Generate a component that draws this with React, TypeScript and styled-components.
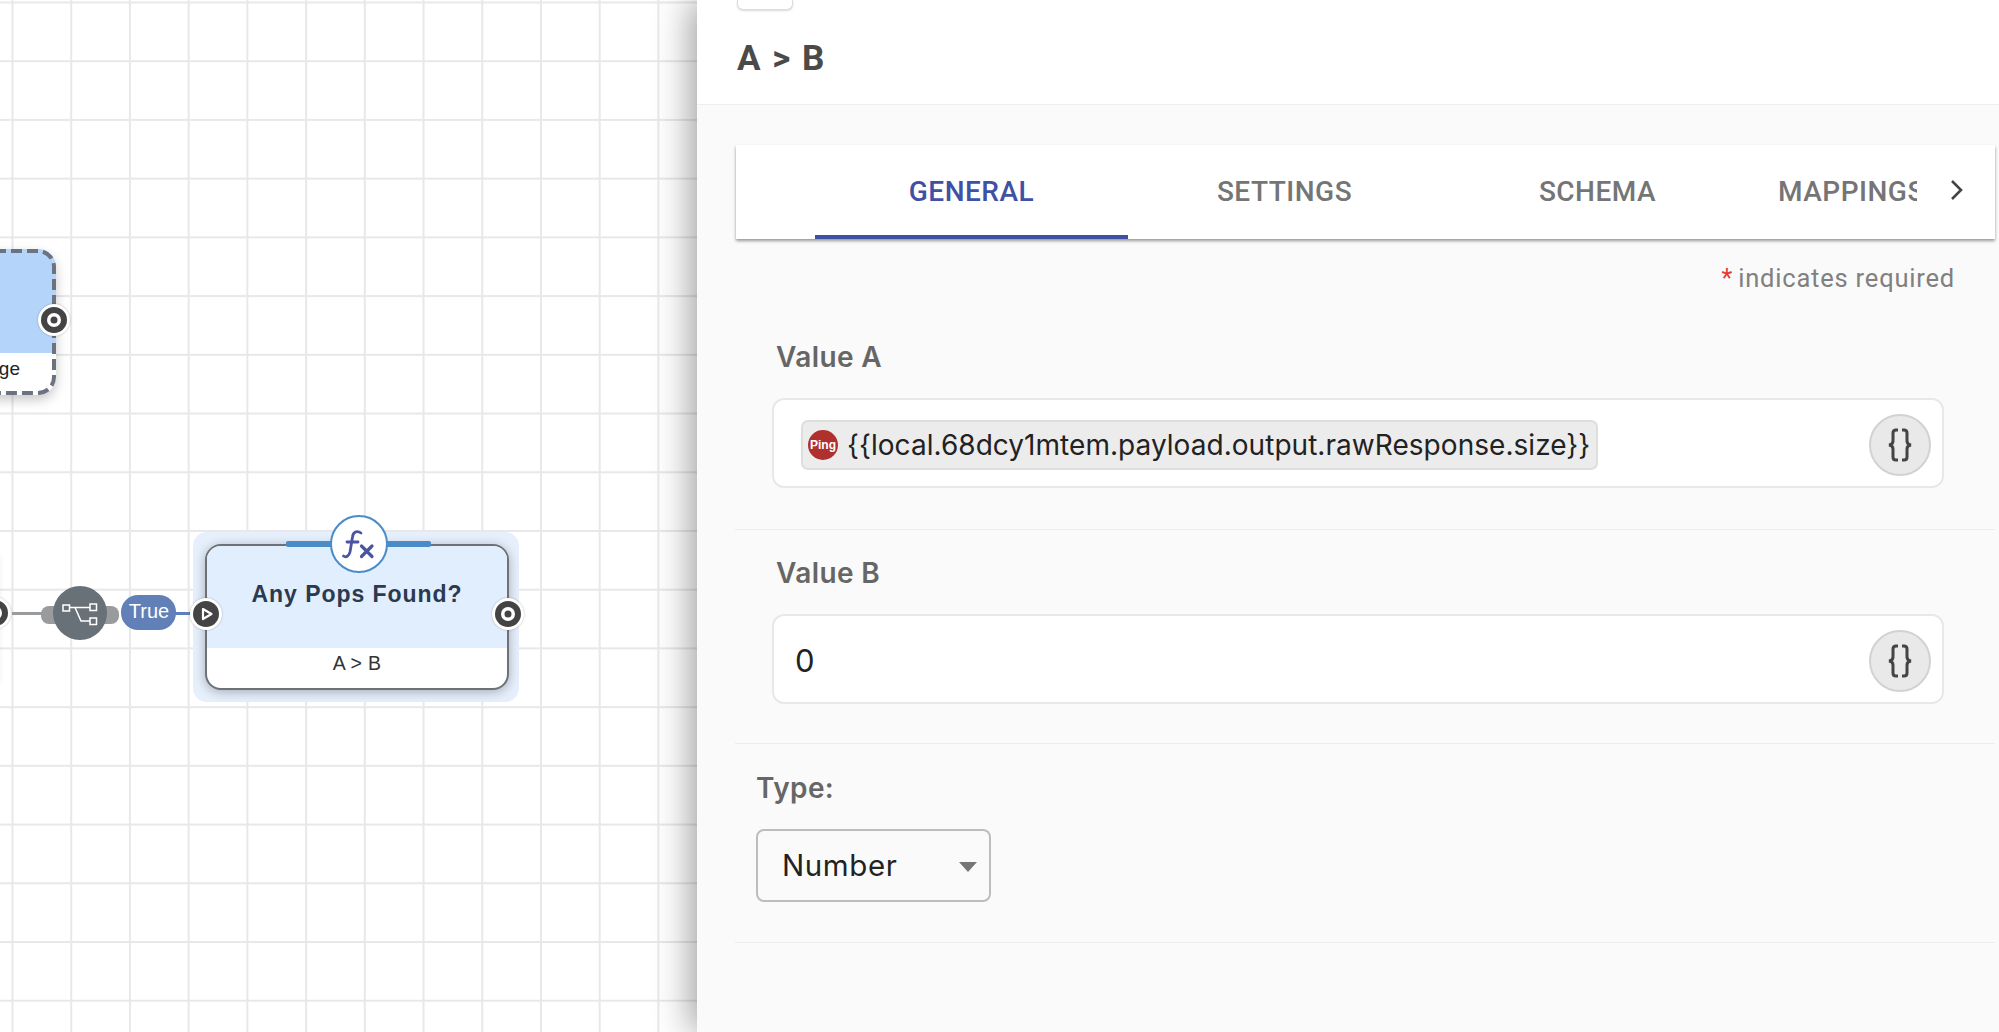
import styled, { createGlobalStyle } from "styled-components";

const GlobalStyle = createGlobalStyle`
  html, body {
    margin: 0;
    height: 100%;
    overflow: hidden;
    background: #fff;
  }
  #root {
    height: 100%;
  }
`;

const Page = styled.div`
  display: flex;
  width: 1999px;
  height: 1032px;
  overflow: hidden;
  font-family: Inter, "Liberation Sans", sans-serif;
`;

/* free canvas: everything in here sits at its diagram position */
const Canvas = styled.div`
  position: relative;
  flex: 0 0 697px;
  height: 100%;
  overflow: visible;
  background-color: #fff;
  background-image: linear-gradient(to right, #e8e8ea 2px, transparent 2px),
    linear-gradient(to bottom, #e8e8ea 2px, transparent 2px);
  background-size: 58.72px 58.72px;
  background-position: 11.5px 1.5px;
`;

const DashedNode = styled.div`
  position: absolute;
  left: -247px;
  top: 249px;
  width: 303px;
  height: 146px;
  border-radius: 18px;
  background: #fff;
  box-shadow: 0 5px 12px rgba(0, 0, 0, 0.22);
  display: flex;
  flex-direction: column;
  overflow: hidden;
`;

const DashedTop = styled.div`
  height: 104px;
  background: #b4d4fa;
`;

const DashedLabel = styled.div`
  flex: 1;
  text-align: right;
  padding-right: 36px;
  font-family: "Liberation Sans", Arial, sans-serif;
  font-size: 19px;
  line-height: 32px;
  color: #222;
`;

const DashedOutline = styled.svg`
  position: absolute;
  left: -247px;
  top: 249px;
  width: 303px;
  height: 146px;
  fill: none;
  stroke: #6b7280;
  stroke-width: 4;
  stroke-dasharray: 11 5;
`;

const OffscreenNode = styled.div`
  position: absolute;
  left: -310px;
  top: 544px;
  width: 305px;
  height: 145px;
  border-radius: 16px;
  background: #fff;
  box-shadow: 0 3px 9px rgba(0, 0, 0, 0.3);
`;

const Halo = styled.div`
  position: absolute;
  left: 193px;
  top: 532px;
  width: 326px;
  height: 170px;
  border-radius: 14px;
  background: #e6effc;
`;

const Node = styled.div`
  position: absolute;
  left: 205px;
  top: 544px;
  width: 304px;
  height: 146px;
  box-sizing: border-box;
  border: 2px solid #6e7276;
  border-radius: 16px;
  background: #fff;
  box-shadow: 0 2px 11px rgba(0, 0, 0, 0.28);
  display: flex;
  flex-direction: column;
  overflow: hidden;
`;

const NodeHead = styled.div`
  height: 102px;
  background: #e1eefd;
  padding-top: 32px;
  box-sizing: border-box;
  text-align: center;
  font-family: "Liberation Sans", Arial, sans-serif;
  font-weight: 700;
  font-size: 23px;
  line-height: 32px;
  letter-spacing: 0.95px;
  color: #2b3a4e;
`;

const NodeSub = styled.div`
  flex: 1;
  text-align: center;
  font-family: "Liberation Sans", Arial, sans-serif;
  font-size: 19.5px;
  line-height: 31px;
  letter-spacing: 0.3px;
  color: #333;
`;

const TopBar = styled.div`
  position: absolute;
  left: 286px;
  top: 541px;
  width: 145px;
  height: 6px;
  border-radius: 2px;
  background: #4a8cc8;
`;

const FxBadge = styled.div`
  position: absolute;
  left: 330px;
  top: 515px;
  width: 58px;
  height: 58px;
  box-sizing: border-box;
  border: 2px solid #4a8cc8;
  border-radius: 50%;
  background: #fff;
  display: flex;
  align-items: center;
  justify-content: center;
`;

const Port = styled.div<{ $x: number; $y: number }>`
  position: absolute;
  left: ${(p) => p.$x - 16}px;
  top: ${(p) => p.$y - 16}px;
  width: 32px;
  height: 32px;
  border-radius: 50%;
  background: #fff;
  box-shadow: 0 0 2px rgba(0, 0, 0, 0.3);
  display: flex;
  align-items: center;
  justify-content: center;
`;

const Edge = styled.div<{ $x: number; $w: number; $color: string }>`
  position: absolute;
  left: ${(p) => p.$x}px;
  top: 612px;
  width: ${(p) => p.$w}px;
  height: 3px;
  background: ${(p) => p.$color};
`;

const Connector = styled.div`
  position: absolute;
  left: 41px;
  top: 606px;
  width: 78px;
  height: 18px;
  border-radius: 8px;
  background: #999b9d;
`;

const Splitter = styled.div`
  position: absolute;
  left: 53px;
  top: 586px;
  width: 54px;
  height: 54px;
  border-radius: 50%;
  background: #687078;
  display: flex;
  align-items: center;
  justify-content: center;
`;

const TruePill = styled.div`
  position: absolute;
  left: 121px;
  top: 595px;
  width: 55px;
  height: 35px;
  padding-left: 1px;
  box-sizing: border-box;
  border-radius: 17px;
  background: #6280b8;
  color: #fff;
  font-family: "Liberation Sans", Arial, sans-serif;
  font-size: 20px;
  line-height: 32px;
  text-align: center;
`;

const Panel = styled.div`
  position: relative;
  flex: 1;
  height: 100%;
  background: #fafafa;
  box-shadow: -6px 0 34px rgba(0, 0, 0, 0.38);
`;

const PanelHeader = styled.div`
  height: 105px;
  box-sizing: border-box;
  background: #fff;
  border-bottom: 1px solid #eeeeee;
  padding-left: 40px;
`;

const TopButton = styled.div`
  width: 56px;
  height: 10px;
  box-sizing: border-box;
  background: #fff;
  border: 1px solid #dcdcdc;
  border-top: 0;
  border-radius: 0 0 6px 6px;
  box-shadow: 0 1px 2px rgba(0, 0, 0, 0.15);
`;

const Title = styled.h1`
  margin: 29px 0 0;
  font-family: Roboto, sans-serif;
  font-weight: 700;
  font-size: 35px;
  line-height: 40px;
  letter-spacing: 1.5px;
  color: #4a4a4a;
`;

const TabBar = styled.div`
  display: flex;
  height: 94px;
  margin: 40px 4px 0 39px;
  background: #fff;
  box-shadow: 0 2px 3px rgba(0, 0, 0, 0.4);
  overflow: hidden;
`;

const TabSpacer = styled.div`
  flex: 0 0 79px;
`;

const Tab = styled.div<{ $active?: boolean; $width: number }>`
  flex: 0 0 ${(p) => p.$width}px;
  height: 94px;
  box-sizing: border-box;
  border-bottom: 4px solid ${(p) => (p.$active ? "#3f51a5" : "transparent")};
  padding-top: 3px;
  display: flex;
  align-items: center;
  justify-content: center;
  font-family: Roboto, sans-serif;
  font-weight: 500;
  font-size: 28px;
  letter-spacing: 0.5px;
  color: ${(p) => (p.$active ? "#3f51a5" : "#757575")};
  white-space: nowrap;
  overflow: hidden;
`;

const ClippedTab = styled(Tab)`
  justify-content: flex-start;
  padding-left: 24px;
`;

const ScrollButton = styled.div`
  flex: 1;
  display: flex;
  align-items: center;
  justify-content: center;
  padding-bottom: 4px;
  color: #444;
`;

const RequiredNote = styled.div`
  display: flex;
  justify-content: flex-end;
  align-items: center;
  gap: 5px;
  height: 30px;
  margin-top: 24px;
  padding-right: 44px;
  font-family: Roboto, sans-serif;
  font-weight: 400;
  font-size: 25.5px;
  letter-spacing: 0.8px;
  color: #808080;
`;

const Star = styled.span`
  color: #e53935;
  font-size: 25px;
`;

const Section = styled.section<{ $top: number; $left: number; $bottom: number }>`
  margin: 0 4px 0 38px;
  padding: ${(p) => p.$top}px 51px ${(p) => p.$bottom}px ${(p) => p.$left}px;
  border-bottom: 1px solid #ededed;
`;

const FieldLabel = styled.div<{ $gap: number; $indent?: number }>`
  height: 34px;
  margin-bottom: ${(p) => p.$gap}px;
  padding-left: ${(p) => p.$indent ?? 0}px;
  font-weight: 600;
  font-size: 28px;
  line-height: 34px;
  letter-spacing: 0.4px;
  color: #666;
`;

const FieldBox = styled.div<{ $height: number }>`
  display: flex;
  align-items: center;
  justify-content: space-between;
  height: ${(p) => p.$height}px;
  box-sizing: border-box;
  padding: 0 11px 0 27px;
  background: #fff;
  border: 2px solid #e8e8e8;
  border-radius: 12px;
  font-size: 28px;
  letter-spacing: 0.04px;
  color: #222;
`;

const Chip = styled.div`
  display: flex;
  align-items: center;
  gap: 9px;
  height: 50px;
  box-sizing: border-box;
  margin-top: 4px;
  padding: 0 6px 0 5px;
  background: #ececec;
  border: 2px solid #dedede;
  border-radius: 7px;
  white-space: nowrap;
`;

const PlainValue = styled.span`
  margin: 2px 0 0 -6px;
  font-size: 31px;
`;

const PingBadge = styled.div`
  flex: 0 0 30px;
  width: 30px;
  height: 30px;
  border-radius: 50%;
  background: #b0302e;
  color: #fff;
  font-family: "Liberation Sans", Arial, sans-serif;
  font-weight: 700;
  font-size: 12px;
  line-height: 30px;
  text-align: center;
`;

const CodeButton = styled.div`
  flex: 0 0 62px;
  width: 62px;
  height: 62px;
  box-sizing: border-box;
  margin-top: 4px;
  border: 2px solid #d2d2d2;
  border-radius: 50%;
  background: #e9e9e9;
  display: flex;
  align-items: center;
  justify-content: center;
`;

const TypeSelect = styled.div`
  position: relative;
  width: 235px;
  height: 73px;
  box-sizing: border-box;
  padding-left: 24px;
  background: #fafafa;
  border: 2px solid #bdbdbd;
  border-radius: 8px;
  font-size: 29.5px;
  line-height: 69px;
  letter-spacing: 0.6px;
  color: #222;
`;

const Caret = styled.span`
  position: absolute;
  right: 12px;
  top: 31px;
  width: 0;
  height: 0;
  border-left: 9.5px solid transparent;
  border-right: 9.5px solid transparent;
  border-top: 10px solid #777;
`;

const BraceIcon = () => (
  <svg width="28" height="34" viewBox="0 0 28 34" fill="none" stroke="#444" strokeWidth="3">
    <path d="M12 2H10C8 2 7 3 7 5V13C7 15 6 16.6 3 17C6 17.4 7 19 7 21V29C7 31 8 32 10 32H12" />
    <path d="M16 2H18C20 2 21 3 21 5V13C21 15 22 16.6 25 17C22 17.4 21 19 21 21V29C21 31 20 32 18 32H16" />
  </svg>
);

const FxIcon = () => (
  <svg width="54" height="54" viewBox="0 0 54 54" fill="none" stroke="#4a55a2" strokeWidth="2.8" strokeLinecap="round">
    <path d="M29 16C25 13 21 15 20.5 20L18 35C17 39 14 41 11.5 39" />
    <path d="M15 25H26" />
    <path d="M29.5 29L40 39.5M40 29L29.5 39.5" strokeWidth="3.2" />
  </svg>
);

const TargetIcon = () => (
  <svg width="26" height="26" viewBox="0 0 26 26">
    <circle cx="13" cy="13" r="13" fill="#444" />
    <circle cx="13" cy="13" r="7" fill="#fff" />
    <circle cx="13" cy="13" r="3.5" fill="#444" />
  </svg>
);

const PlayIcon = () => (
  <svg width="26" height="26" viewBox="0 0 26 26">
    <circle cx="13" cy="13" r="13" fill="#444" />
    <path d="M10 8L18.5 13L10 18Z" fill="#444" stroke="#fff" strokeWidth="2.2" strokeLinejoin="round" />
  </svg>
);

const BranchIcon = () => (
  <svg width="40" height="28" viewBox="0 0 40 28" fill="none" stroke="#fff" strokeWidth="1.5">
    <rect x="3" y="6" width="6.5" height="6" />
    <rect x="30" y="5" width="6.5" height="6.5" />
    <rect x="30" y="19" width="6.5" height="6.5" />
    <path d="M9.5 8.5H30M15 8.5L21 22H30" />
  </svg>
);

const tabs = [
  { label: "GENERAL", active: true },
  { label: "SETTINGS" },
  { label: "SCHEMA" },
];

export default function App() {
  return (
    <Page>
      <GlobalStyle />
      <Canvas>
        <DashedNode>
          <DashedTop />
          <DashedLabel>ge</DashedLabel>
        </DashedNode>
        <DashedOutline viewBox="0 0 303 146">
          <rect x="2" y="2" width="299" height="142" rx="16" />
        </DashedOutline>
        <Port $x={54} $y={320}>
          <TargetIcon />
        </Port>

        <OffscreenNode />
        <Port $x={-5} $y={613}>
          <TargetIcon />
        </Port>
        <Edge $x={12} $w={32} $color="#999b9d" />
        <Connector />
        <Splitter>
          <BranchIcon />
        </Splitter>
        <Edge $x={174} $w={20} $color="#5c7fbd" />
        <TruePill>True</TruePill>

        <Halo />
        <Node>
          <NodeHead>Any Pops Found?</NodeHead>
          <NodeSub>A &gt; B</NodeSub>
        </Node>
        <TopBar />
        <FxBadge>
          <FxIcon />
        </FxBadge>
        <Port $x={206} $y={614}>
          <PlayIcon />
        </Port>
        <Port $x={508} $y={614}>
          <TargetIcon />
        </Port>
      </Canvas>

      <Panel>
        <PanelHeader>
          <TopButton />
          <Title>A &gt; B</Title>
        </PanelHeader>

        <TabBar>
          <TabSpacer />
          {tabs.map((t) => (
            <Tab key={t.label} $active={t.active} $width={313}>
              {t.label}
            </Tab>
          ))}
          <ClippedTab $width={163}>MAPPINGS</ClippedTab>
          <ScrollButton>
            <svg width="24" height="24" viewBox="0 0 24 24" fill="none" stroke="#444" strokeWidth="2.6">
              <path d="M8 3L17 12L8 21" />
            </svg>
          </ScrollButton>
        </TabBar>

        <RequiredNote>
          <Star>*</Star>
          indicates required
        </RequiredNote>

        <Section $top={47} $left={37} $bottom={41}>
          <FieldLabel $gap={24} $indent={4}>
            Value A
          </FieldLabel>
          <FieldBox $height={90}>
            <Chip>
              <PingBadge>Ping</PingBadge>
              {"{{local.68dcy1mtem.payload.output.rawResponse.size}}"}
            </Chip>
            <CodeButton>
              <BraceIcon />
            </CodeButton>
          </FieldBox>
        </Section>

        <Section $top={26} $left={37} $bottom={39}>
          <FieldLabel $gap={24} $indent={4}>
            Value B
          </FieldLabel>
          <FieldBox $height={90}>
            <PlainValue>0</PlainValue>
            <CodeButton>
              <BraceIcon />
            </CodeButton>
          </FieldBox>
        </Section>

        <Section $top={27} $left={21} $bottom={40}>
          <FieldLabel $gap={24}>Type:</FieldLabel>
          <TypeSelect>
            Number
            <Caret />
          </TypeSelect>
        </Section>
      </Panel>
    </Page>
  );
}
